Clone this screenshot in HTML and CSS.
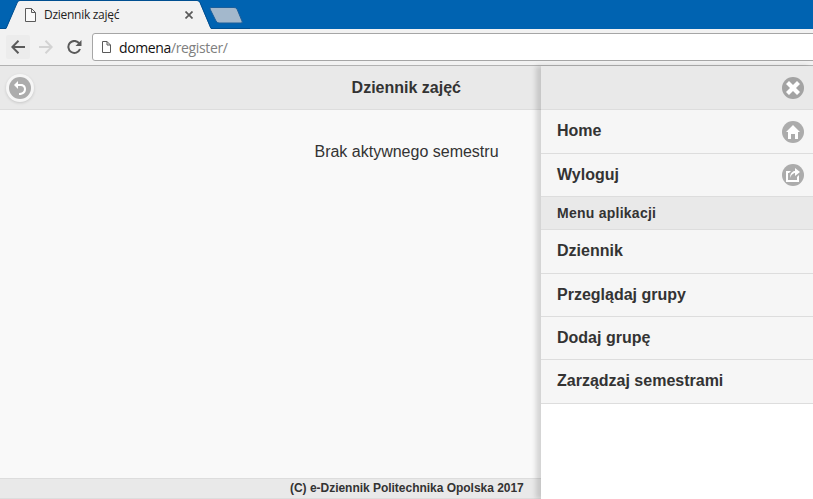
FILE: index.html
```html
<!DOCTYPE html>
<html lang="pl">
<head>
<meta charset="utf-8">
<title>Dziennik zajęć</title>
<link rel="stylesheet" href="styles.css">
</head>
<body>
<div class="browser">
  <div class="tabstrip">
    <svg class="tab-shape" width="250" height="29" viewBox="0 0 250 29">
      <path d="M5 29 L6.500 28 L17 3 Q18 .7 20 .7 H197 Q199 .7 200 3 L210 27 L212 29Z" fill="#f2f2f2"/>
      <path d="M0 28.500H6L17.500 2Q18.500.5 20 .5H197Q199 .5 200 2.500L211 28.500H250" fill="none" stroke="#004f91"/>
      <path d="M211 7.500H234Q236 7.500 237 9L242 21Q243 23 241 23H219Q217 23 216 21L210 9Q209.500 7.500 211 7.500Z" fill="#a3b8cc" stroke="#1b5e9a"/>
    </svg>
    <div class="tab">
      <svg width="11" height="14" viewBox="0 0 11 14"><path d="M.5.5H6.500L10.500 4.500V13.500H.5ZM6.500.5V4.500H10.500" fill="#fafafa" stroke="#5a5a5a"/></svg>
      <span class="tab-title">Dziennik zajęć</span>
      <svg class="tab-close" width="8" height="8" viewBox="0 0 8 8"><path d="M.5.5L7.500 7.500M7.500.5L.5 7.500" stroke="#5a5a5a" stroke-width="1.700"/></svg>
    </div>
  </div>
  <div class="toolbar">
    <span class="nav nav-active"><svg width="14" height="14" viewBox="0 0 14 14"><path d="M14 7H1.500M7.500 .8L1.300 7L7.500 13.200" fill="none" stroke="#5a5a5a" stroke-width="2"/></svg></span>
    <span class="nav"><svg width="14" height="14" viewBox="0 0 14 14"><path d="M0 7H12.500M6.500 .8L12.700 7L6.500 13.200" fill="none" stroke="#d3d3d3" stroke-width="2"/></svg></span>
    <span class="nav"><svg width="15" height="14" viewBox="0 0 15 14"><path d="M12.300 3.500A6 6 0 1 0 13 9" fill="none" stroke="#5a5a5a" stroke-width="2"/><path d="M14.500 0V6H8.500Z" fill="#5a5a5a"/></svg></span>
    <div class="address">
      <svg width="9" height="12" viewBox="0 0 9 12"><path d="M.5.5H5L8.500 4V11.500H.5ZM5 .5V4H8.500" fill="none" stroke="#5a5a5a"/></svg>
      <span class="url">domena<span class="path">/register/</span></span>
    </div>
  </div>
</div>
<div class="app">
  <main class="page">
    <header class="bar">
      <span class="back"><svg class="icon" width="22" height="22" viewBox="-4 -4 22 22"><circle cx="7" cy="7" r="11"/><path d="M1 4L5 0V3H8C11.500 3 13 5.500 13 8C13 11.500 11 14 6 14V12C9 12 11 10.500 11 8C11 6.500 10 5 7.500 5H5V8Z"/></svg></span>
      <h1>Dziennik zajęć</h1>
    </header>
    <p class="message">Brak aktywnego semestru</p>
    <footer>(C) e-Dziennik Politechnika Opolska 2017</footer>
  </main>
  <nav class="panel">
    <div class="row close"><svg class="icon" width="22" height="22" viewBox="-4 -4 22 22"><circle cx="7" cy="7" r="11"/><path d="M14 3L11 0L7 4L3 0L0 3L4 7L0 11L3 14L7 10L11 14L14 11L10 7Z"/></svg></div>
    <div class="row"><span>Home</span><svg class="icon" width="22" height="22" viewBox="-4 -4 22 22"><circle cx="7" cy="7" r="11"/><path d="M7 0L0 7H2V14H5V9H9V14H12V7H14Z"/></svg></div>
    <div class="row short"><span>Wyloguj</span><svg class="icon" width="22" height="22" viewBox="-4 -4 22 22"><circle cx="7" cy="7" r="11"/><path d="M9 5V8L14 4L9 0V3C9 3 4 3 4 10C6 5 9 5 9 5ZM11 12H2V5H3L5 3H0V14H13V7L11 9Z"/></svg></div>
    <div class="row divider"><span>Menu aplikacji</span></div>
    <div class="row"><span>Dziennik</span></div>
    <div class="row short"><span>Przeglądaj grupy</span></div>
    <div class="row short"><span>Dodaj grupę</span></div>
    <div class="row"><span>Zarządzaj semestrami</span></div>
  </nav>
</div>
</body>
</html>
```
FILE: styles.css
```css
* { box-sizing: border-box; }
body {
  margin: 0;
  width: 813px;
  height: 499px;
  overflow: hidden;
  display: flex;
  flex-direction: column;
  font-family: "Liberation Sans", Arial, sans-serif;
  font-size: 16px;
  color: #333;
  background: #fff;
}
svg { display: block; flex: none; }
.browser { flex: none; height: 66px; font-family: "Open Sans", sans-serif; }
.tabstrip { height: 29px; background: #0063b1; position: relative; }
.tab-shape { position: absolute; left: 0; top: 0; }
.tab {
  position: relative;
  width: 193px;
  height: 29px;
  padding-left: 25px;
  display: flex;
  align-items: center;
}
.tab-title { margin-left: 8px; font-size: 12px; letter-spacing: -0.28px; color: #222; }
.tab-close { margin-left: auto; }
.toolbar {
  height: 37px;
  background: #f2f2f2;
  border-bottom: 1px solid #b2b2b2;
  display: flex;
  align-items: center;
  padding-left: 6px;
}
.nav {
  width: 24px;
  height: 24px;
  margin-right: 4px;
  border-radius: 2px;
  display: flex;
  align-items: center;
  justify-content: center;
}
.nav-active { background: #ececec; }
.address {
  flex: 1;
  height: 28px;
  margin-left: 2px;
  margin-right: -4px;
  padding-left: 9px;
  border: 1px solid #a6a6a6;
  border-radius: 3px;
  background: #fff;
  display: flex;
  align-items: center;
}
.url { margin-left: 8px; font-size: 14px; color: #111; letter-spacing: -0.37px; }
.path { color: #808080; }
.app { flex: 1; display: flex; min-height: 0; }
.page {
  width: 541px;
  flex: none;
  background: #f9f9f9;
  display: flex;
  flex-direction: column;
}
.bar {
  height: 44px;
  background: #e9e9e9;
  border-bottom: 1px solid #ddd;
  display: flex;
  align-items: center;
  padding-left: 6px;
}
.back {
  width: 28px;
  height: 28px;
  padding: 3px;
  border-radius: 50%;
  background: #f6f6f6;
  box-shadow: 0 1px 3px rgba(0, 0, 0, 0.15);
}
h1 { margin: 0 0 0 317.6px; font-size: 16px; line-height: 20px; white-space: nowrap; }
.message { margin: 32px 0 0; width: 813px; text-align: center; line-height: 20px; }
footer {
  margin-top: auto;
  width: 541px;
  height: 21px;
  padding-left: 290px;
  background: #e9e9e9;
  border: solid #ddd;
  border-width: 1px 0;
  font-size: 12px;
  font-weight: bold;
  letter-spacing: -0.025px;
  line-height: 18px;
  white-space: nowrap;
}
.panel {
  flex: 1;
  position: relative;
  background: #fff;
  box-shadow: -5px 0 5px rgba(0, 0, 0, 0.15);
  font-weight: bold;
}
.row {
  height: 44px;
  padding: 0 9px 0 16px;
  background: #f6f6f6;
  border-bottom: 1px solid #ddd;
  display: flex;
  align-items: center;
  justify-content: space-between;
}
.row span { line-height: 20px; margin-top: -2px; }
.short { height: 43px; }
.short span { margin-top: 0; }
.close { justify-content: flex-end; background: #e9e9e9; }
.close circle { fill: #a3a3a3; }
.divider { height: 33px; background: #e9e9e9; font-size: 14px; }
.divider span { margin-top: 0; letter-spacing: 0.25px; }
.icon circle { fill: #acacac; }
.close .icon circle { fill: #a3a3a3; }
.icon path { fill: #fff; }
```
